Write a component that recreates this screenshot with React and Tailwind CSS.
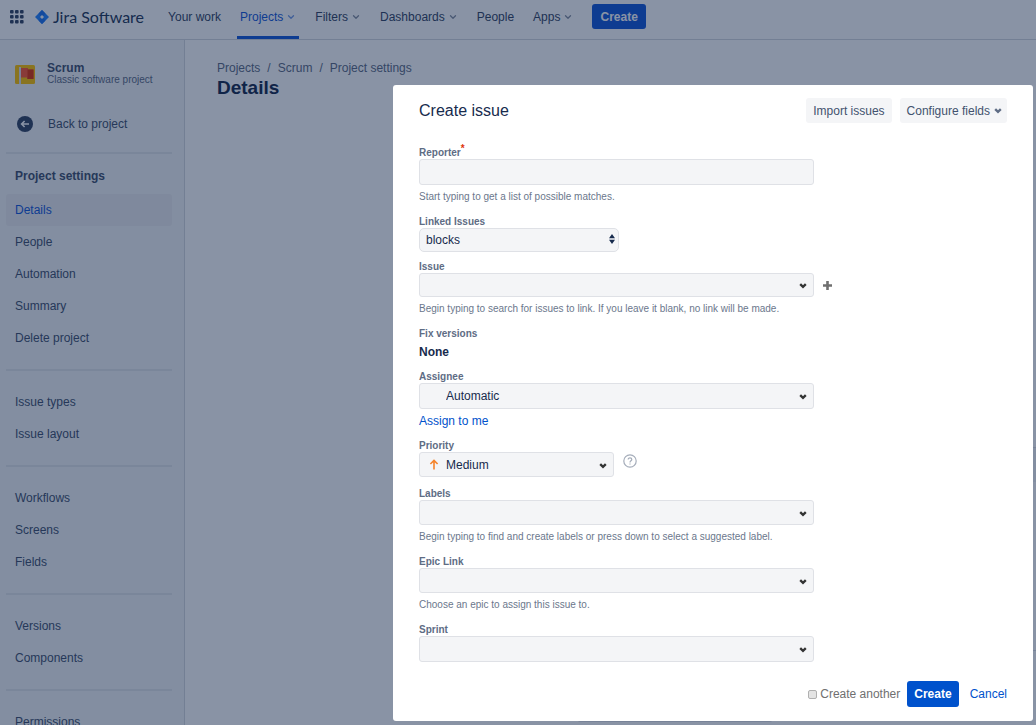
import React, { useState } from 'react';
import { ChevronDown } from 'lucide-react';

const NAV_ITEMS = [
  { label: 'Your work' },
  { label: 'Projects', menu: true, active: true },
  { label: 'Filters', menu: true },
  { label: 'Dashboards', menu: true },
  { label: 'People' },
  { label: 'Apps', menu: true },
];

const SIDEBAR_GROUPS = [
  ['Details', 'People', 'Automation', 'Summary', 'Delete project'],
  ['Issue types', 'Issue layout'],
  ['Workflows', 'Screens', 'Fields'],
  ['Versions', 'Components'],
  ['Permissions'],
];

// --- ICONS ---
const AppSwitcherIcon = () => (
  <svg width="14" height="14" viewBox="0 0 14 14" fill="currentColor">
    {[0, 5, 10].map((y) => [0, 5, 10].map((x) => <rect key={`${x}-${y}`} x={x} y={y} width="3.6" height="3.6" rx="1" />))}
  </svg>
);

const JiraMark = () => (
  <svg width="14" height="14" viewBox="0 0 14 14">
    <path d="M7 0 14 7 7 14 0 7Z" fill="#2684ff" />
    <path d="M7 0 10.5 3.5 7 7 3.5 3.5Z M7 14 3.5 10.5 7 7 10.5 10.5Z" fill="#1f74f0" />
    <path d="M7 5 9 7 7 9 5 7Z" fill="#fff" />
  </svg>
);

const ProjectAvatar = () => (
  <svg width="20" height="19" viewBox="0 0 20 19" className="shrink-0">
    <rect width="20" height="19" rx="1.5" fill="#ffc400" />
    <path d="M4 2h2v17H4z" fill="#dfe1e6" />
    <path d="M6 3h7v1.5h5.5v9.5H12v-1.5H6z" fill="#ff5630" />
    <path d="M12.5 4.5H18.5V14H12.5z" fill="#de350b" />
  </svg>
);

const BackIcon = () => (
  <svg width="16" height="16" viewBox="0 0 16 16" className="shrink-0">
    <circle cx="8" cy="8" r="8" fill="#344563" />
    <path d="M12 8H4.8M7.6 5 4.6 8l3 3" fill="none" stroke="#fff" strokeWidth="1.6" />
  </svg>
);

const Caret = ({ className }) => (
  <svg width="8" height="6" viewBox="0 0 8 6" className={className}>
    <path d="M1.2 1.2 4 3.8 6.800 1.2" fill="none" stroke="currentColor" strokeWidth="2.4" />
  </svg>
);

const UpDownIcon = ({ className }) => (
  <svg width="6" height="10" viewBox="0 0 6 10" fill="currentColor" className={className}>
    <path d="M3 0 6 4.2H0zM3 10 0 5.8h6z" />
  </svg>
);

const PriorityIcon = ({ className }) => (
  <svg width="10" height="11" viewBox="0 0 10 11" className={className}>
    <path d="M5 10.5V1.5M1.4 5 5 1.4 8.6 5" fill="none" stroke="#f5842b" strokeWidth="1.6" />
  </svg>
);

const HelpIcon = () => (
  <svg width="14" height="14" viewBox="0 0 14 14" fill="none" stroke="#a5adba" strokeWidth="1.2">
    <circle cx="7" cy="7" r="6.2" />
    <path d="M5.2 5.600c0-2.400 3.600-2.200 3.600-.1C8.800 6.800 7 6.800 7 8.400M7 9.400v1.200" />
  </svg>
);

const PlusIcon = () => (
  <svg width="9" height="9" viewBox="0 0 9 9">
    <path d="M4.5 0v9M0 4.5h9" stroke="#707070" strokeWidth="2.6" />
  </svg>
);

// --- FORM PARTS ---
const boxStyle = 'w-full appearance-none rounded-[3px] border border-[#dfe1e6] bg-[#f4f5f7] text-[12px] text-[#172b4d] outline-none';

function Field({ id, label, required, help, gap = 'mt-[11px]', children }) {
  return (
    <div className={gap}>
      <label htmlFor={id} className="flex h-3 text-[10px] leading-3 font-bold text-[#5e6c84]">
        {label}
        {required && <span className="-mt-1 text-[#de350b]">*</span>}
      </label>
      {children}
      {help && <p className="mt-1 text-[10px] leading-4 text-[#6b778c]">{help}</p>}
    </div>
  );
}

function SelectBox({ id, options = [''], height = 'h-[25px]', width = 'w-[395px]', padding = 'pl-[26px]', icon }) {
  return (
    <div className={`relative max-w-full ${width}`}>
      <select id={id} className={`block ${boxStyle} ${height} ${padding}`}>
        {options.map((o) => <option key={o}>{o}</option>)}
      </select>
      {icon}
      <Caret className="pointer-events-none absolute top-1/2 right-[7px] -mt-[2px] text-[#333333]" />
    </div>
  );
}

function TopNav() {
  return (
    <header className="flex h-10 shrink-0 items-center border-b border-[#d5d8de] pb-[6px] pl-[10px] text-[#344563]">
      <button aria-label="Switch apps"><AppSwitcherIcon /></button>
      <a href="#" className="ml-[11px] flex items-center gap-1 font-[Lato] text-[16px] leading-4 text-[#253858]">
        <JiraMark />Jira Software
      </a>
      <nav className="-mb-[6px] ml-[21px] flex gap-[13px] self-stretch">
        {NAV_ITEMS.map(({ label, menu, active }) => (
          <a key={label} href="#" className={`flex items-center gap-[3px] border-b-3 px-[3px] pb-[2px] text-[12px] ${active ? 'border-[#1458d8] text-[#1458d8]' : 'border-transparent'}`}>
            {label}
            {menu && <ChevronDown size={10} strokeWidth={3} className="opacity-60" />}
          </a>
        ))}
      </nav>
      <button className="ml-4 h-[25px] rounded-[3px] bg-[#1458d8] px-2 text-[12px] font-bold text-white">Create</button>
    </header>
  );
}

function Sidebar() {
  return (
    <aside className="w-[185px] shrink-0 overflow-hidden border-r border-[#d5d8de] bg-[#f4f5f7] pr-3 pl-[6px] text-[12px] text-[#42526e]">
      <div className="flex items-center gap-3 pt-[22px] pl-[9px]">
        <ProjectAvatar />
        <div>
          <div className="leading-3 font-bold">Scrum</div>
          <div className="text-[10px] leading-3 text-[#5e6c84]">Classic software project</div>
        </div>
      </div>
      <a href="#" className="mt-[22px] flex h-8 items-center gap-[15px] pl-[11px]"><BackIcon />Back to project</a>
      <hr className="mt-3 border-t-2 border-[#e3e6ea]" />
      <h2 className="mt-[6px] mb-[2px] pl-[9px] leading-8 font-bold">Project settings</h2>
      {SIDEBAR_GROUPS.map((group, i) => (
        <nav key={group[0]}>
          {i > 0 && <hr className="my-[15px] border-t-2 border-[#e3e6ea]" />}
          {group.map((item) => (
            <a key={item} href="#" className={`block h-8 rounded-[3px] pl-[9px] leading-8 ${item === 'Details' ? 'bg-[#ebecf0] text-[#1458d8]' : ''}`}>{item}</a>
          ))}
        </nav>
      ))}
    </aside>
  );
}

// Project form, mostly hidden while the dialog is open
function DetailsForm() {
  return (
    <form className="mt-[347px] ml-[360px] w-[560px]">
      <div className="rounded-[3px] border border-[#dfe1e6]">
        <div className="h-[34px] bg-[#f4f5f7]" />
        <textarea aria-label="Description" className="block h-[168px] w-full" />
      </div>
      <select aria-label="Project lead" className="mt-[31px] block h-10 w-[196px] appearance-none rounded-[3px] border border-[#dfe1e6]" />
    </form>
  );
}

function CreateIssueDialog() {
  const [another, setAnother] = useState(false);

  return (
    <div role="dialog" aria-label="Create issue" className="w-[640px] max-w-full rounded-[3px] bg-white px-[26px] pt-[13px] pb-[14px]">
      <div className="flex items-center gap-2">
        <h2 className="mr-auto text-[16px] leading-[25px] text-[#172b4d]">Create issue</h2>
        <button className="h-[25px] rounded-[3px] bg-[#f4f5f7] px-[7px] text-[12px] text-[#42526e]">Import issues</button>
        <button className="flex h-[25px] items-center gap-1 rounded-[3px] bg-[#f4f5f7] pr-[5px] pl-[7px] text-[12px] text-[#42526e]">
          Configure fields<Caret className="text-[#5e6c84]" />
        </button>
      </div>

      <form onSubmit={(e) => e.preventDefault()}>
        <Field id="reporter" label="Reporter" required gap="mt-6" help="Start typing to get a list of possible matches.">
          <input id="reporter" type="text" className={`block h-[26px] max-w-[395px] px-2 ${boxStyle}`} />
        </Field>
        <Field id="link-type" label="Linked Issues">
          <div className="relative w-[200px]">
            <select id="link-type" className="block h-6 w-full appearance-none rounded-[5px] border border-[#dfe1e6] bg-[#f4f5f7] pl-[6px] text-[12px] text-[#172b4d]">
              <option>blocks</option>
            </select>
            <UpDownIcon className="pointer-events-none absolute top-[6px] right-1 text-[#172b4d]" />
          </div>
        </Field>
        <Field id="issue" label="Issue" gap="mt-[9px]" help="Begin typing to search for issues to link. If you leave it blank, no link will be made.">
          <div className="flex items-center gap-[9px]">
            <SelectBox id="issue" height="h-6" />
            <button type="button" aria-label="Add issue"><PlusIcon /></button>
          </div>
        </Field>
        <div className="mt-[11px]">
          <div className="text-[10px] leading-3 font-bold text-[#5e6c84]">Fix versions</div>
          <div className="mt-1 text-[12px] leading-4 font-bold text-[#172b4d]">None</div>
        </div>
        <Field id="assignee" label="Assignee">
          <SelectBox id="assignee" options={['Automatic']} height="h-[26px]" />
          <a href="#" className="mt-1 block text-[12px] leading-4 text-[#0052cc]">Assign to me</a>
        </Field>
        <Field id="priority" label="Priority">
          <div className="flex gap-[9px]">
            <SelectBox
              id="priority"
              options={['Medium']}
              width="w-[195px]"
              icon={<PriorityIcon className="pointer-events-none absolute top-[7px] left-[10px]" />}
            />
            <button type="button" aria-label="Priority help" className="h-[18px]"><HelpIcon /></button>
          </div>
        </Field>
        <Field id="labels" label="Labels" help="Begin typing to find and create labels or press down to select a suggested label.">
          <SelectBox id="labels" />
        </Field>
        <Field id="epic" label="Epic Link" help="Choose an epic to assign this issue to.">
          <SelectBox id="epic" />
        </Field>
        <Field id="sprint" label="Sprint">
          <SelectBox id="sprint" height="h-[26px]" />
        </Field>

        <div className="mt-[19px] flex items-center justify-end text-[12px]">
          <label className="flex items-center gap-[3px] text-[#707070]">
            <input
              type="checkbox"
              checked={another}
              onChange={(e) => setAnother(e.target.checked)}
              className="size-[9px] appearance-none rounded-[2px] border border-[#b0b0b0] bg-[#e4e4e4] checked:bg-[#0052cc]"
            />
            Create another
          </label>
          <button type="submit" className="ml-[7px] h-[26px] rounded-[3px] bg-[#0052cc] px-[7px] font-bold text-white">Create</button>
          <button type="button" className="ml-[11px] text-[#0052cc]">Cancel</button>
        </div>
      </form>
    </div>
  );
}

export default function App() {
  return (
    <div className="flex h-screen flex-col overflow-hidden bg-white font-['Liberation_Sans',Arial,sans-serif]">
      <TopNav />
      <div className="flex min-h-0 flex-1">
        <Sidebar />
        <main className="min-w-0 flex-1 overflow-hidden pt-5 pl-8">
          <div className="flex gap-[7px] text-[12px] leading-4 text-[#5e6c84]">
            <a href="#">Projects</a><span>/</span><a href="#">Scrum</a><span>/</span><a href="#">Project settings</a>
          </div>
          <h1 className="text-[19px] leading-6 font-bold text-[#172b4d]">Details</h1>
          <DetailsForm />
        </main>
      </div>

      {/* BLANKET + DIALOG */}
      <div className="fixed inset-0 flex items-start justify-end overflow-hidden bg-[#091e42]/48 pt-[85px] pr-[3px]">
        <CreateIssueDialog />
      </div>
    </div>
  );
}
